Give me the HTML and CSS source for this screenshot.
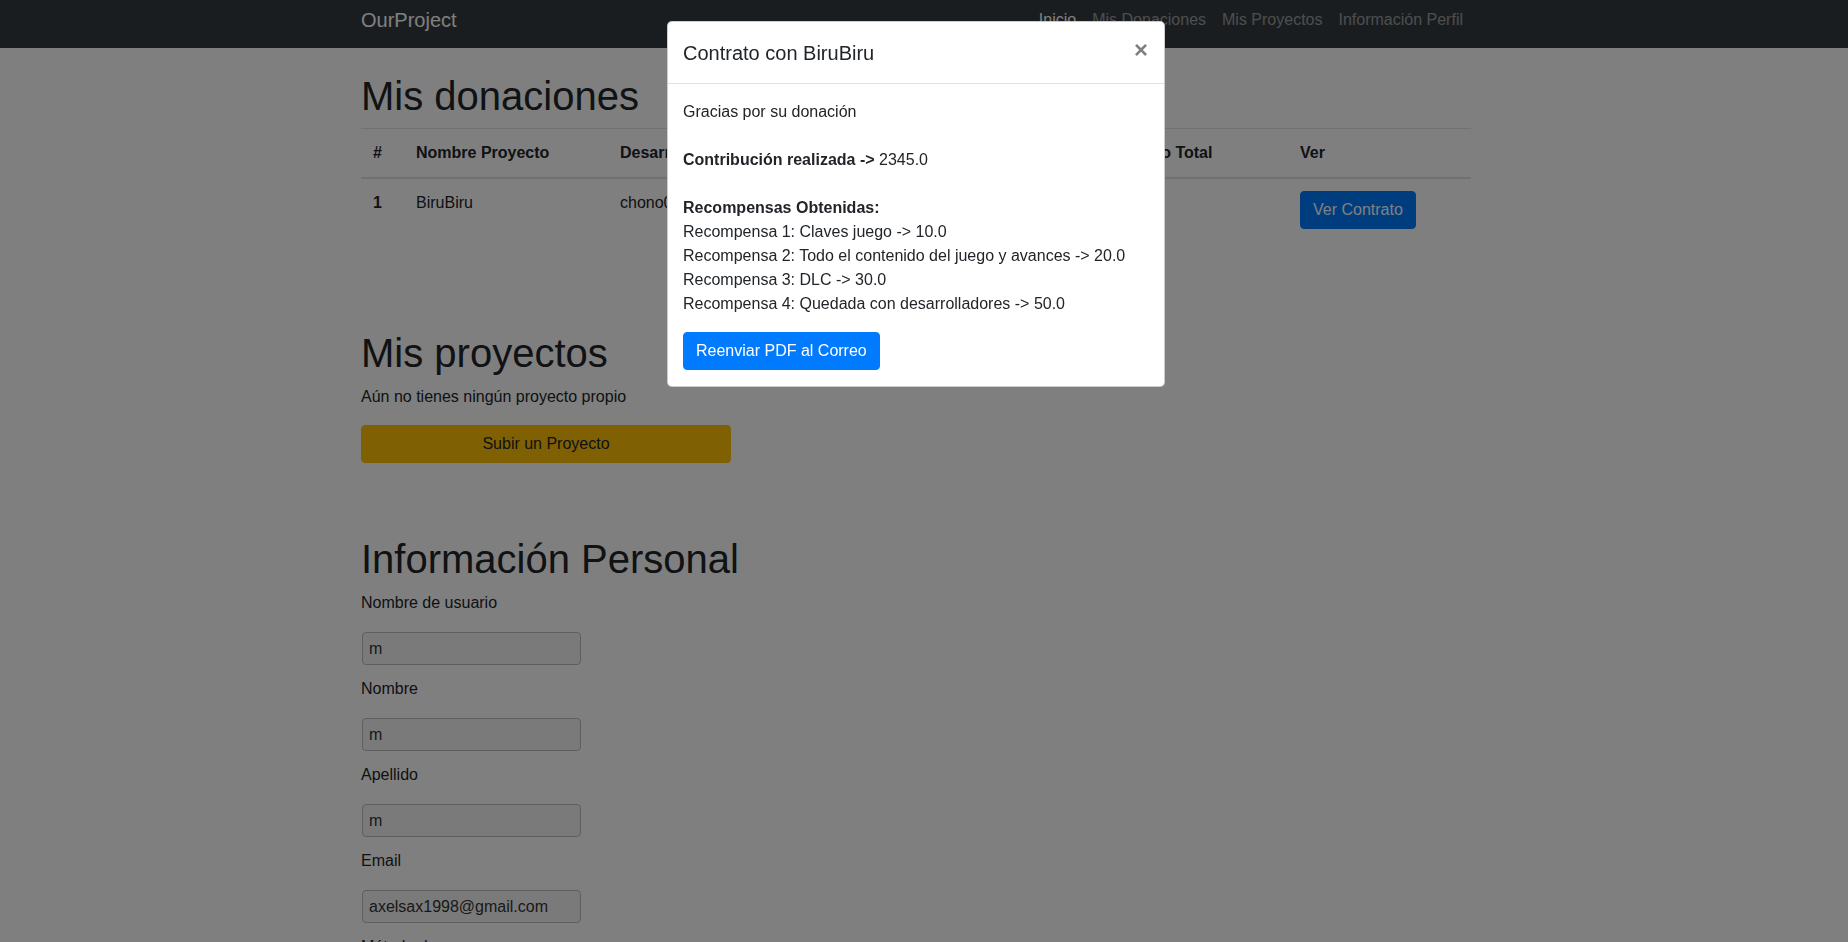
FILE: index.html
```html
<!DOCTYPE html>
<html lang="es">
<head>
<meta charset="utf-8">
<title>OurProject</title>
<link rel="stylesheet" href="styles.css">
</head>
<body class="modal-open">
<nav class="navbar">
  <div class="container nav-inner">
    <a class="brand" href="#">OurProject</a>
    <ul class="nav-links">
      <li class="nav-link active">Inicio</li>
      <li class="nav-link">Mis Donaciones</li>
      <li class="nav-link">Mis Proyectos</li>
      <li class="nav-link">Información Perfil</li>
    </ul>
  </div>
</nav>

<div class="page">
<main class="container main">
  <section class="section">
    <h1 class="title">Mis donaciones</h1>
    <table class="table">
      <thead>
        <tr>
          <th class="c-num">#</th>
          <th class="c-name">Nombre Proyecto</th>
          <th class="c-dev">Desarrollador</th>
          <th class="c-total">Monto Total</th>
          <th class="c-ver">Ver</th>
        </tr>
      </thead>
      <tbody>
        <tr>
          <th>1</th>
          <td>BiruBiru</td>
          <td>chono0@hotmail.com</td>
          <td>2345</td>
          <td><button class="btn btn-primary">Ver Contrato</button></td>
        </tr>
      </tbody>
    </table>
  </section>

  <section class="section">
    <h1 class="title">Mis proyectos</h1>
    <p class="text">Aún no tienes ningún proyecto propio</p>
    <button class="btn btn-warning btn-upload">Subir un Proyecto</button>
  </section>

  <section class="section">
    <h1 class="title">Información Personal</h1>
    <div class="field">
      <label class="label">Nombre de usuario</label>
      <input class="input" type="text" value="m" readonly>
    </div>
    <div class="field">
      <label class="label">Nombre</label>
      <input class="input" type="text" value="m" readonly>
    </div>
    <div class="field">
      <label class="label">Apellido</label>
      <input class="input" type="text" value="m" readonly>
    </div>
    <div class="field">
      <label class="label">Email</label>
      <input class="input" type="text" value="axelsax1998@gmail.com" readonly>
    </div>
    <div class="field">
      <label class="label">Método de pago</label>
      <input class="input" type="text" value="" readonly>
    </div>
  </section>
</main>
</div>

<div class="backdrop"></div>

<div class="modal-wrap">
  <div class="modal">
    <div class="modal-header">
      <h5 class="modal-title">Contrato con BiruBiru</h5>
      <button class="close" type="button">×</button>
    </div>
    <div class="modal-body">
      <p class="m-line gap">Gracias por su donación</p>
      <p class="m-line gap"><b>Contribución realizada -&gt;</b> 2345.0</p>
      <p class="m-line last"><b>Recompensas Obtenidas:</b><br>
        Recompensa 1: Claves juego -&gt; 10.0<br>
        Recompensa 2: Todo el contenido del juego y avances -&gt; 20.0<br>
        Recompensa 3: DLC -&gt; 30.0<br>
        Recompensa 4: Quedada con desarrolladores -&gt; 50.0</p>
      <button class="btn btn-primary">Reenviar PDF al Correo</button>
    </div>
  </div>
</div>
</body>
</html>
```

FILE: styles.css
```css
* { box-sizing: border-box; }

html, body {
  margin: 0;
  height: 100%;
  overflow: hidden;
}

body {
  font-family: "Liberation Sans", Arial, sans-serif;
  font-size: 16px;
  line-height: 1.5;
  color: #212529;
  background: #fff;
}

.page { padding-right: 16px; }

.container {
  width: 1140px;
  margin: 0 auto;
  padding: 0 15px;
}

/* navbar */
.navbar {
  background: #343a40;
  height: 48px;
  padding-right: 16px;
}
.nav-inner {
  display: flex;
  justify-content: space-between;
  align-items: flex-start;
  height: 48px;
}
.brand {
  display: block;
  margin-top: 5px;
  font-size: 20px;
  line-height: 30px;
  color: #fff;
  text-decoration: none;
}
.nav-links {
  display: flex;
  list-style: none;
  margin: 0;
  padding: 0;
}
.nav-link {
  padding: 8px 8px;
  line-height: 24px;
  color: rgba(255, 255, 255, .5);
}
.nav-link.active { color: #fff; }

/* main */
.main { padding-top: 24px; }
.section { padding-bottom: 72px; }

.title {
  margin: 0 0 8px;
  font-size: 40px;
  font-weight: 500;
  line-height: 1.2;
}

.table {
  width: 100%;
  border-collapse: collapse;
  table-layout: fixed;
  margin-bottom: 16px;
}
.table th, .table td {
  padding: 12px;
  text-align: left;
  vertical-align: top;
  border-top: 1px solid #dee2e6;
  line-height: 24px;
  white-space: nowrap;
  overflow: hidden;
}
.table thead th { border-bottom: 2px solid #dee2e6; }
.c-num { width: 43px; }
.c-name { width: 204px; }
.c-dev { width: 503px; }
.c-total { width: 177px; }
.c-ver { width: 183px; }

.text { margin: 0 0 16px; }

.btn {
  display: inline-block;
  font-family: inherit;
  font-size: 16px;
  line-height: 24px;
  padding: 6px 12px;
  border: 1px solid transparent;
  border-radius: 4px;
  cursor: pointer;
}
.btn-primary { background: #007bff; border-color: #007bff; color: #fff; }
.btn-warning { background: #ffc107; border-color: #ffc107; color: #212529; }
.btn-upload { width: 370px; display: block; text-align: center; }

.field {
  display: flex;
  flex-direction: column;
  align-items: flex-start;
  margin-bottom: 12px;
}
.label {
  line-height: 24px;
  margin-bottom: 17px;
}
.input {
  width: 219px;
  height: 33px;
  margin-left: 1px;
  padding: 0 6px;
  font-family: inherit;
  font-size: 16px;
  color: #333;
  background: #f5f5f5;
  border: 1px solid #bcbcbc;
  border-radius: 4px;
}

/* modal */
.backdrop {
  position: fixed;
  inset: 0;
  background: rgba(0, 0, 0, .5);
  z-index: 1040;
}
.modal-wrap {
  position: fixed;
  inset: 0;
  z-index: 1050;
  display: flex;
  justify-content: center;
  align-items: flex-start;
  padding: 21px 16px 0 0;
}
.modal {
  width: 498px;
  background: #fff;
  border: 1px solid rgba(0, 0, 0, .2);
  border-radius: 5px;
}
.modal-header {
  display: flex;
  align-items: flex-start;
  justify-content: space-between;
  padding: 16px 16px 15px 15px;
  border-bottom: 1px solid #dee2e6;
}
.modal-title {
  margin: 0;
  font-size: 20px;
  font-weight: 500;
  line-height: 30px;
}
.close {
  margin: -16px -16px -16px auto;
  padding: 16px;
  background: transparent;
  border: 0;
  font-family: inherit;
  font-size: 24px;
  font-weight: 700;
  line-height: 1;
  color: #000;
  text-shadow: 0 1px 0 #fff;
  opacity: .5;
}
.modal-body { padding: 16px 16px 16px 15px; }
.m-line { margin: 0; }
.m-line.gap { margin-bottom: 24px; }
.m-line.last { margin-bottom: 16px; }
```
